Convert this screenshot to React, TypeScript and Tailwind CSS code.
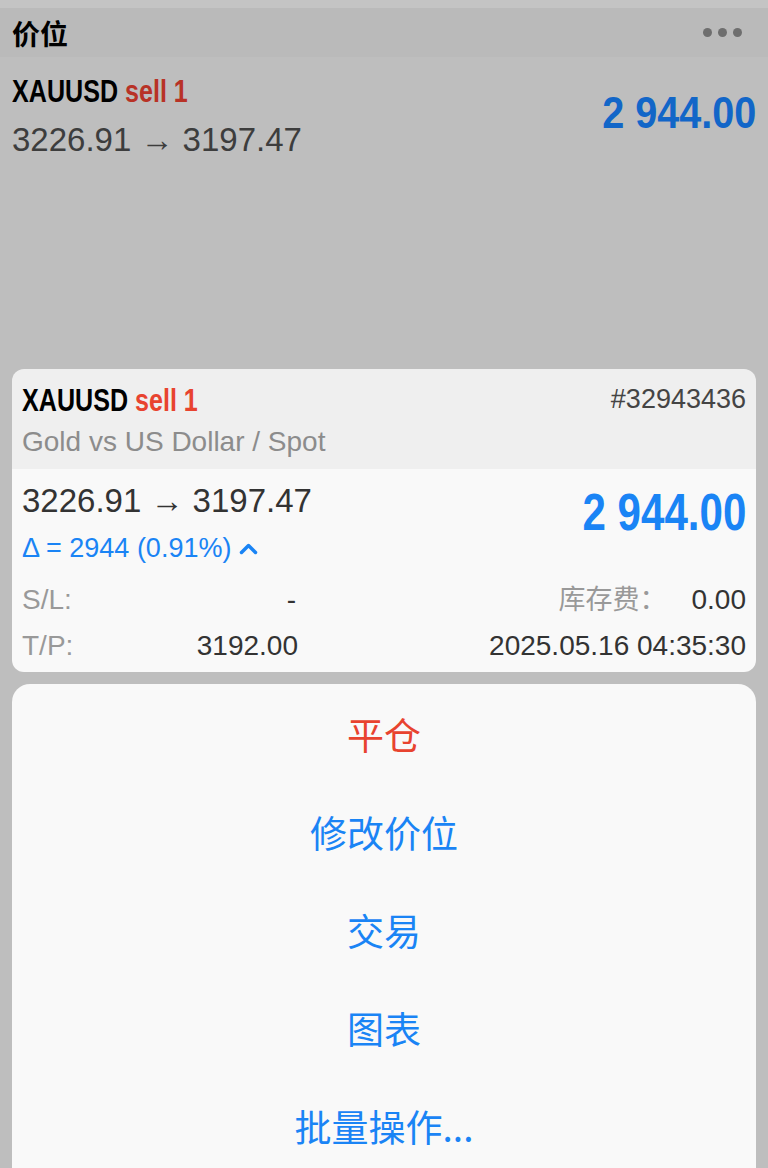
const cond = "font-['Liberation_Sans',sans-serif] font-bold inline-block whitespace-nowrap";
const sans = "font-['Liberation_Sans','Noto_Sans_CJK_SC',sans-serif]";

const actions = [
  { label: "平仓", color: "text-[#e8432f]" },
  { label: "修改价位", color: "text-[#1a84f5]" },
  { label: "交易", color: "text-[#1a84f5]" },
  { label: "图表", color: "text-[#1a84f5]" },
  { label: "批量操作...", color: "text-[#1a84f5]" },
];

export default function App() {
  return (
    <div className={`w-[768px] h-[1168px] overflow-hidden bg-[#bebebe] flex flex-col ${sans}`}>
      <div className="h-2 shrink-0 bg-[#c4c4c4]" />
      <div className="h-[49px] shrink-0 bg-[#bababa] flex items-center justify-between pl-3 pr-[26px]">
        <span className="text-[28px] font-bold text-black font-['Noto_Sans_CJK_SC',sans-serif]">价位</span>
        <div className="flex gap-[6px]">
          <span className="w-[9px] h-[9px] rounded-full bg-[#6e6e6e]" />
          <span className="w-[9px] h-[9px] rounded-full bg-[#6e6e6e]" />
          <span className="w-[9px] h-[9px] rounded-full bg-[#6e6e6e]" />
        </div>
      </div>

      {/* position row behind the sheet */}
      <div className="h-[312px] shrink-0 flex justify-between px-3 pt-[17px]">
        <div className="flex flex-col">
          <div className={`${cond} text-[31px] leading-[36px] scale-x-[0.81] origin-left`}>
            <span className="text-black">XAUUSD </span>
            <span className="text-[#b83226]">sell 1</span>
          </div>
          <div className="text-[33px] leading-[40px] text-[#3d3d3d] mt-[10px]">3226.91 → 3197.47</div>
        </div>
        <div className={`${cond} text-[44px] leading-[50px] text-[#1266c8] mt-[14px] scale-x-[0.9] origin-right`}>2 944.00</div>
      </div>

      <div className="mx-3 shrink-0 rounded-[12px] overflow-hidden">
        <div className="bg-[#efefef] h-[100px] px-[10px] pt-[14px]">
          <div className="flex justify-between items-start">
            <div className={`${cond} text-[31px] leading-[36px] scale-x-[0.81] origin-left`}>
              <span className="text-black">XAUUSD </span>
              <span className="text-[#e8432f]">sell 1</span>
            </div>
            <span className="text-[27px] leading-[32px] text-[#444]">#32943436</span>
          </div>
          <div className="text-[28px] leading-[32px] text-[#8c8c8c] mt-[7px]">Gold vs US Dollar / Spot</div>
        </div>
        <div className="bg-[#f9f9f9] h-[203px] px-[10px] pt-[13px]">
          <div className="flex justify-between">
            <div className="flex flex-col">
              <div className="text-[33px] leading-[38px] text-[#333]">3226.91 → 3197.47</div>
              <div className="flex items-center gap-[8px] text-[27px] leading-[32px] text-[#1a84f5] mt-[12px]">
                <span>Δ = 2944 (0.91%)</span>
                <svg width="19" height="14" viewBox="0 0 19 14" fill="none">
                  <path d="M2.5 11.5 9.5 4.5l7 7" stroke="currentColor" strokeWidth="3.5" strokeLinecap="round" strokeLinejoin="round" />
                </svg>
              </div>
            </div>
            <div className={`${cond} text-[52px] leading-[56px] text-[#1a84f5] mt-[2px] scale-x-[0.81] origin-right`}>2 944.00</div>
          </div>
          <div className="grid grid-cols-[276px_1fr] text-[28px] leading-[45px] mt-[13px]">
            <div className="flex justify-between">
              <span className="text-[#999]">S/L:</span>
              <span className="text-[#333] pr-[2px]">-</span>
            </div>
            <div className="flex justify-end items-baseline">
              <span className="text-[#999] text-[27px] mr-[25px]">库存费：</span>
              <span className="text-[#333]">0.00</span>
            </div>
            <div className="flex justify-between">
              <span className="text-[#999]">T/P:</span>
              <span className="text-[#333]">3192.00</span>
            </div>
            <div className="flex justify-end">
              <span className="text-[#333]">2025.05.16 04:35:30</span>
            </div>
          </div>
        </div>
      </div>

      <div className="mx-3 mt-3 flex-1 min-h-0 bg-[#f9f9f9] rounded-t-[18px] flex flex-col items-center pt-[24px]">
        {actions.map((a) => (
          <div key={a.label} className={`h-[98px] shrink-0 flex items-start text-[37px] leading-[52px] ${a.color} font-['Noto_Sans_CJK_SC',sans-serif]`}>
            {a.label}
          </div>
        ))}
      </div>
    </div>
  );
}
